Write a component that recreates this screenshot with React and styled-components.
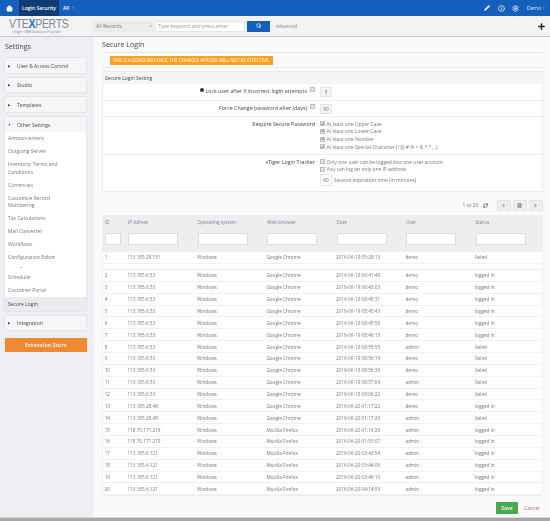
import React from 'react';
import styled, { createGlobalStyle } from 'styled-components';
import { Home, Info, Settings as Gear, Pencil, Search, Plus, RefreshCw, ChevronLeft, ChevronRight, FileText, Check as CheckMark } from 'lucide-react';

const Global = createGlobalStyle`
  html, body { margin: 0; padding: 0; }
  body { font-family: "Open Sans", "Liberation Sans", sans-serif; background: #fafafa; color: #555; overflow: hidden; }
  * { box-sizing: border-box; }
`;
const Page = styled.div`width:550px;height:521px;display:flex;flex-direction:column;overflow:hidden;filter:blur(.35px);`;
const TopBar = styled.div`height:16px;background:#1560bd;display:flex;align-items:stretch;color:#fff;font-size:5px;flex:none;`;
const HomeTab = styled.div`width:19px;display:flex;align-items:center;justify-content:center;`;
const ActiveTab = styled.div`width:40px;background:#0f3d73;display:flex;align-items:center;justify-content:center;font-weight:600;`;
const AllTab = styled.div`padding-left:4px;display:flex;align-items:center;gap:3px;font-weight:600;`;
const Caret = styled.span`color:#7fa9de;font-size:3px;`;
const TopRight = styled.div`margin-left:auto;display:flex;align-items:center;gap:7.5px;padding-right:5px;`;
const DemoLabel = styled.span`color:#e4eefa;font-size:5px;display:flex;gap:2px;align-items:center;`;
const SubBar = styled.div`height:21px;background:#f3f3f3;border-bottom:1px solid #c8c8c8;display:flex;align-items:center;flex:none;position:relative;`;
const LogoBox = styled.div`width:93px;padding-left:9px;display:flex;flex-direction:column;line-height:1;`;
const LogoMark = styled.div`font-family:"Liberation Sans",sans-serif;font-size:13px;letter-spacing:-.4px;color:#808890;line-height:11.5px;font-weight:400;transform:scaleX(.81);transform-origin:left center;white-space:nowrap;`;
const LogoX = styled.span`color:#1a6fc0;font-weight:700;`;
const LogoTag = styled.div`font-size:3.2px;font-weight:600;color:#7f9dba;letter-spacing:.15px;margin-top:1px;padding-left:3.5px;white-space:nowrap;`;
const RecordSelect = styled.div`width:61px;height:11px;background:#ececec;color:#777;font-size:5px;display:flex;align-items:center;justify-content:space-between;padding:0 2px 0 3px;`;
const SearchInput = styled.div`width:90px;height:11px;background:#fff;border:1px solid #e6e6e6;color:#999;font-size:5px;display:flex;align-items:center;padding-left:2px;margin-left:1px;`;
const SearchBtn = styled.div`width:23px;height:11px;background:#1560bd;margin-left:2px;display:flex;align-items:center;justify-content:center;color:#fff;`;
const AdvLink = styled.span`font-size:4.6px;color:#7b8ea5;margin-left:6px;`;
const PlusWrap = styled.div`margin-left:auto;padding-right:4px;display:flex;color:#222;`;
const Body = styled.div`flex:1;display:flex;min-height:0;`;
const Sidebar = styled.div`width:93px;background:#edeff3;padding:4px 5px 0;flex:none;`;
const SideTitle = styled.div`font-size:7px;color:#444;height:17px;line-height:12px;`;
const Acc = styled.div`background:#fff;box-shadow:0 0 1px rgba(0,0,0,.25);width:81px;margin-bottom:5px;`;
const AccHead = styled.div`height:${p => p.$h || 14}px;background:#f6f6f6;display:flex;align-items:center;font-size:5px;color:#444;padding-left:3px;`;
const Tri = styled.span`font-size:3px;width:9px;color:#333;`;
const SideList = styled.div`padding:0 22px 0 3px;font-size:5px;color:#777;line-height:7.5px;`;
const SideItem = styled.div`padding:3px 0 2.5px;`;
const SideSub = styled.div`padding-left:12px;height:7px;line-height:7px;`;
const SideActive = styled.div`height:13.5px;background:#e9ebef;display:flex;align-items:center;padding-left:3px;font-size:5px;color:#444;`;
const ExtBtn = styled.div`width:82px;height:14px;background:#ef8a33;color:#fdf1e5;font-size:5px;font-weight:700;letter-spacing:.2px;display:flex;align-items:center;justify-content:center;margin-top:8px;`;
const Main = styled.div`flex:1;background:#fafafa;padding:0 7px 0 8px;border-left:1px solid #f3f3f3;min-width:0;`;
const PageTitle = styled.div`font-size:7.1px;color:#444;height:16px;line-height:15px;border-bottom:1px solid #e8e8e8;`;
const NoticeRow = styled.div`height:15px;border-bottom:1px solid #e8e8e8;display:flex;align-items:center;padding-left:7.5px;`;
const Notice = styled.div`background:#ff9e1f;color:#fff6e8;font-size:4.35px;font-weight:600;height:9px;line-height:9px;padding:0 1px;width:163px;white-space:nowrap;overflow:hidden;text-align:center;`;
const Panel = styled.div`margin-top:3px;background:#fff;border:1px solid #ececec;`;
const PanelHead = styled.div`height:12px;background:#f5f5f5;font-size:5px;color:#444;padding-left:2px;display:flex;align-items:center;`;
const FormRow = styled.div`display:grid;grid-template-columns:217px 1fr;height:${p => p.$h}px;border-top:${p => p.$first ? 'none' : '1px solid #efefef'};`;
const FormLabel = styled.div`display:flex;justify-content:flex-end;align-items:flex-start;gap:3px;font-size:5.3px;padding-top:${p => p.$pt || 3}px;padding-right:5px;color:#444;white-space:nowrap;`;
const HelpDot = styled.span`width:4px;height:4px;border-radius:50%;background:#333;margin-top:1px;margin-right:-2px;`;
const Check = styled.span`width:5px;height:5px;border:.5px solid #bbb;background:#e4e4e4;color:#222;display:inline-flex;align-items:center;justify-content:center;flex:none;border-radius:.7px;`;
const NumBox = styled.div`width:12px;height:${p => p.$h || 10}px;background:${p => p.$w ? '#fff' : '#f3f3f3'};border:1px solid #e6e6e6;color:#666;font-size:4.6px;display:flex;align-items:center;justify-content:center;margin-top:${p => p.$mt ?? 3}px;`;
const OptionList = styled.div`display:flex;flex-direction:column;font-size:4.95px;color:#777;padding-top:3px;`;
const Opt = styled.label`display:flex;align-items:center;gap:1.5px;height:7.67px;white-space:nowrap;`;
const SessionRow = styled.div`display:flex;align-items:center;gap:2px;height:12px;margin-top:1px;`;
const Pager = styled.div`height:23px;display:flex;align-items:center;justify-content:flex-end;font-size:5px;color:#777;padding-top:3px;`;
const PagerRefresh = styled.span`display:flex;margin-left:4px;color:#333;`;
const PagerBtn = styled.div`width:14.5px;height:11px;background:#eee;border:.5px solid #e4e4e4;display:flex;align-items:center;justify-content:center;color:#333;margin-left:${p => p.$ml || 0}px;`;
const Table = styled.div`border:1px solid #eee;border-top:none;background:#fff;`;
const HeadRow = styled.div`display:grid;grid-template-columns:23px repeat(6, 69.5px);height:14px;background:#eeeeee;align-items:center;color:#6d86a8;font-size:4.7px;padding-left:2px;`;
const FilterRow = styled.div`display:grid;grid-template-columns:23px repeat(6, 69.5px);height:22.7px;background:#eeeeee;align-items:start;padding:4px 0 0 2px;`;
const FilterBox = styled.div`height:11.5px;width:${p => p.$w}px;background:#fff;border:1px solid #ddd;`;
const DataRow = styled.div`display:grid;grid-template-columns:22.7px repeat(6, 69.5px);height:${p => p.$h || 11.87}px;align-items:center;border-bottom:1px solid #f0f0f0;color:#777;font-size:4.7px;padding-left:1.7px;white-space:nowrap;`;
const BlankRow = styled.div`height:6px;border-bottom:1px solid #f0f0f0;`;
const Footer = styled.div`display:flex;align-items:center;justify-content:flex-end;height:18px;margin-top:3px;`;
const SaveBtn = styled.div`width:22px;height:12px;background:#4ca84f;color:#e6f5e6;font-size:5px;font-weight:700;display:flex;align-items:center;justify-content:center;`;
const CancelLink = styled.span`font-size:5px;color:#b5687a;margin:0 3.5px 0 6px;`;
const BottomStrip = styled.div`height:4px;background:#a9a9a9;border-top:1px solid #d8d8d8;flex:none;`;

const G = 'Google Chrome', F = 'Mozilla Firefox';
const rows = [
  ['1','113.185.28.151',G,'2016-06-19 05:29:13','demo','failed'],
  ['2','113.185.6.53',G,'2016-06-19 06:41:49','demo','logged in'],
  ['3','113.185.6.53',G,'2016-06-19 06:43:03','demo','logged in'],
  ['4','113.185.6.53',G,'2016-06-19 08:45:31','demo','logged in'],
  ['5','113.185.6.53',G,'2016-06-19 08:45:43','demo','logged in'],
  ['6','113.185.6.53',G,'2016-06-19 08:45:59','demo','logged in'],
  ['7','113.185.6.53',G,'2016-06-19 08:46:13','demo','logged in'],
  ['8','113.185.6.53',G,'2016-06-19 08:55:55','admin','failed'],
  ['9','113.185.6.53',G,'2016-06-19 08:56:19','demo','failed'],
  ['10','113.185.6.53',G,'2016-06-19 08:56:36','demo','failed'],
  ['11','113.185.6.53',G,'2016-06-19 08:57:04','admin','failed'],
  ['12','113.185.6.53',G,'2016-06-19 09:06:22','demo','failed'],
  ['13','113.185.28.48',G,'2016-06-20 01:17:22','demo','logged in'],
  ['14','113.185.28.48',G,'2016-06-20 01:17:29','admin','failed'],
  ['15','118.70.171.219',F,'2016-06-20 01:19:28','admin','logged in'],
  ['16','118.70.171.219',F,'2016-06-20 01:53:07','admin','logged in'],
  ['17','113.185.6.121',F,'2016-06-20 03:43:54','admin','logged in'],
  ['18','113.185.6.121',F,'2016-06-20 03:44:06','admin','logged in'],
  ['19','113.185.6.121',F,'2016-06-20 03:46:10','admin','logged in'],
  ['20','113.185.6.121',F,'2016-06-20 04:14:53','admin','logged in'],
];
const sideItems = ['Announcement','Outgoing Server','Inventory: Terms and Conditions','Currencies','Customize Record Numbering','Tax Calculations','Mail Converter','Workflows','Configuration Editor'];
const On = () => <Check><CheckMark size={4} strokeWidth={5} /></Check>;

export default function App() {
  return (
    <Page>
      <Global />
      <TopBar>
        <HomeTab><Home size={7} fill="#fff" strokeWidth={1.5} /></HomeTab>
        <ActiveTab>Login Security</ActiveTab>
        <AllTab>All <Caret>▾</Caret></AllTab>
        <TopRight>
          <Pencil size={6} fill="#fff" strokeWidth={1.5} />
          <Info size={7} strokeWidth={2.5} />
          <Gear size={7} strokeWidth={2.5} />
          <DemoLabel>Demo <Caret>▾</Caret></DemoLabel>
        </TopRight>
      </TopBar>
      <SubBar>
        <LogoBox>
          <LogoMark>VTE<LogoX>X</LogoX>PERTS</LogoMark>
          <LogoTag>vTiger CRM Solution Provider</LogoTag>
        </LogoBox>
        <RecordSelect>All Records <Caret style={{color:'#666'}}>▾</Caret></RecordSelect>
        <SearchInput>Type keyword and press enter</SearchInput>
        <SearchBtn><Search size={5.5} strokeWidth={3} /></SearchBtn>
        <AdvLink>Advanced</AdvLink>
        <PlusWrap><Plus size={9} strokeWidth={4} /></PlusWrap>
      </SubBar>
      <Body>
        <Sidebar>
          <SideTitle>Settings</SideTitle>
          <Acc><AccHead $h={15}><Tri>▶</Tri>User &amp; Access Control</AccHead></Acc>
          <Acc><AccHead><Tri>▶</Tri>Studio</AccHead></Acc>
          <Acc><AccHead $h={15}><Tri>▶</Tri>Templates</AccHead></Acc>
          <Acc>
            <AccHead $h={15}><Tri>▼</Tri>Other Settings</AccHead>
            <SideList>
              {sideItems.map(s => <SideItem key={s}>{s}</SideItem>)}
              <SideSub>–</SideSub>
              <SideItem>Scheduler</SideItem>
              <SideItem>Customer Portal</SideItem>
            </SideList>
            <SideActive>Secure Login</SideActive>
          </Acc>
          <Acc><AccHead><Tri>▶</Tri>Integration</AccHead></Acc>
          <ExtBtn>Extension Store</ExtBtn>
        </Sidebar>
        <Main>
          <PageTitle>Secure Login</PageTitle>
          <NoticeRow><Notice>THIS IS A DEMO INSTANCE. THE CHANGES APPLIED WILL NOT BE EFFECTIVE.</Notice></NoticeRow>
          <Panel>
            <PanelHead>Secure Login Setting</PanelHead>
            <FormRow $h={16} $first>
              <FormLabel><HelpDot />Lock user after X incorrect login attempts <Check /></FormLabel>
              <NumBox>5</NumBox>
            </FormRow>
            <FormRow $h={16}>
              <FormLabel>Force Change password after (days) <Check /></FormLabel>
              <NumBox>90</NumBox>
            </FormRow>
            <FormRow $h={38}>
              <FormLabel>Require Secure Password</FormLabel>
              <OptionList>
                <Opt><On />At least one Upper Case</Opt>
                <Opt><On />At least one Lower Case</Opt>
                <Opt><On />At least one Number</Opt>
                <Opt><On />At least one Special Character (! @ # % ^ &amp; * ? , .)</Opt>
              </OptionList>
            </FormRow>
            <FormRow $h={37}>
              <FormLabel>vTiger Login Tracker</FormLabel>
              <OptionList>
                <Opt><Check />Only one user can be logged into one user account</Opt>
                <Opt><Check />You can log on only one IP address</Opt>
                <SessionRow><NumBox $w $h={12} $mt={0}>60</NumBox>Session expiration time (in minutes)</SessionRow>
              </OptionList>
            </FormRow>
          </Panel>
          <Pager>
            1 to 20<PagerRefresh><RefreshCw size={5} strokeWidth={2.5} /></PagerRefresh>
            <PagerBtn $ml={9}><ChevronLeft size={5} strokeWidth={3} /></PagerBtn>
            <PagerBtn $ml={1.5}><FileText size={5} /></PagerBtn>
            <PagerBtn $ml={1.5}><ChevronRight size={5} strokeWidth={3} /></PagerBtn>
          </Pager>
          <Table>
            <HeadRow>
              <span>ID</span><span>IP Adress</span><span>Operating system</span><span>Web browser</span><span>Date</span><span>User</span><span>Status</span>
            </HeadRow>
            <FilterRow>
              <FilterBox $w={16} /><FilterBox $w={50} /><FilterBox $w={50} /><FilterBox $w={50} /><FilterBox $w={50} /><FilterBox $w={50} /><FilterBox $w={50} />
            </FilterRow>
            {rows.map((r, i) => (
              <React.Fragment key={r[0]}>
                <DataRow $h={i === 0 ? 12.3 : undefined}>
                  <span>{r[0]}</span><span>{r[1]}</span><span>Windows</span><span>{r[2]}</span><span>{r[3]}</span><span>{r[4]}</span><span>{r[5]}</span>
                </DataRow>
                {i === 0 && <BlankRow />}
              </React.Fragment>
            ))}
          </Table>
          <Footer>
            <SaveBtn>Save</SaveBtn>
            <CancelLink>Cancel</CancelLink>
          </Footer>
        </Main>
      </Body>
      <BottomStrip />
    </Page>
  );
}
